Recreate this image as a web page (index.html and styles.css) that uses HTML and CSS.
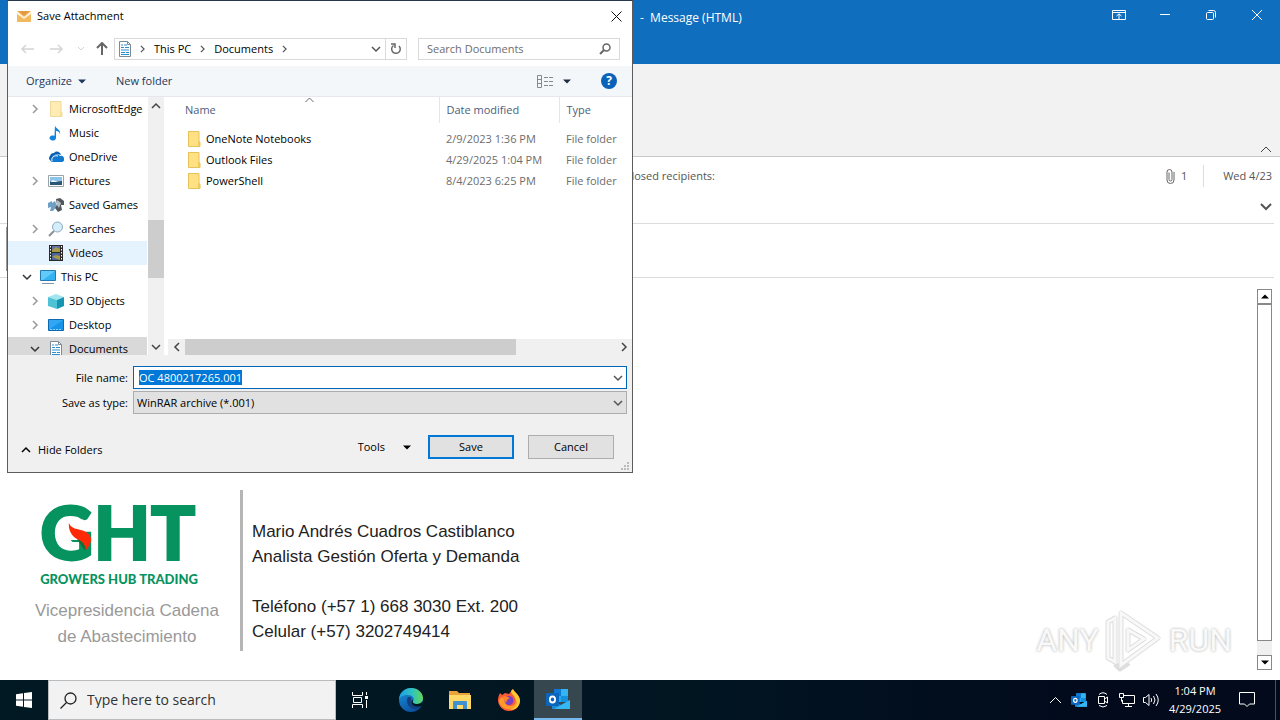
FILE: index.html
```html
<!DOCTYPE html>
<html lang="en">
<head>
<meta charset="utf-8">
<title>Save Attachment</title>
<link rel="stylesheet" href="styles.css">
</head>
<body>
<svg class="defs" aria-hidden="true">
  <symbol id="folder" viewBox="0 0 14 16"><path d="M1 0h11v10l1 1v4H1z" fill="#ffe184"/><path d="M1.500.500h10.500v10l1 1v4H1.500z" fill="none" stroke="#e6c25a"/><path d="M11 15v-4l2-1v5z" fill="#f0c956"/></symbol>
  <symbol id="doc" viewBox="0 0 16 16"><path d="M2.500.500h8l3 3v12h-11z" fill="#fff" stroke="#7d8a94"/><path d="M10.500.500v3h3" fill="none" stroke="#7d8a94"/><path d="M4 4h2M7 4h3M4 6.500h3M8 6.500h4M4 9h8M4 11.500h4M9 11.500h3M4 13.500h8" stroke="#2b8fd0"/></symbol>
  <symbol id="right" viewBox="0 0 8 10"><path d="M2 1l4 4-4 4" fill="none" stroke="currentColor" stroke-width="1.500"/></symbol>
  <symbol id="down" viewBox="0 0 10 8"><path d="M1 2l4 4 4-4" fill="none" stroke="currentColor" stroke-width="1.500"/></symbol>
  <symbol id="up" viewBox="0 0 10 8"><path d="M1 6l4-4 4 4" fill="none" stroke="currentColor" stroke-width="1.500"/></symbol>
  <symbol id="caret" viewBox="0 0 8 5"><path d="M0 .500h8L4 4.500z" fill="currentColor"/></symbol>
  <symbol id="caretup" viewBox="0 0 8 5"><path d="M0 4.500h8L4 .500z" fill="currentColor"/></symbol>
  <symbol id="outlook" viewBox="0 0 24 22"><path d="M8 1h14v13H8z" fill="#28a8ea"/><path d="M8 1h7v7H8z" fill="#0f78d4"/><path d="M15 1h7v7h-7z" fill="#32b5f1"/><path d="M15 8h7v6h-7z" fill="#1490df"/><path d="M6 12l9 5 9-5v9H6z" fill="#1a8bd8"/><path d="M24 12v9H8z" fill="#35b8f1"/><rect y="5" width="13" height="13" rx="1" fill="#0a65bd"/><ellipse cx="6.500" cy="11.500" rx="2.600" ry="3" fill="none" stroke="#fff" stroke-width="1.800"/></symbol>
</svg>

<main class="mail">
  <header class="titlebar">
    <span class="window-title">-&nbsp; Message (HTML)</span>
    <div class="window-buttons">
      <button aria-label="Ribbon display options"><svg width="14" height="12" viewBox="0 0 14 12"><path d="M.5 1.500h13v9H.5zM.5 3.500h13M7 10V5M4.500 7L7 4.800 9.500 7" fill="none" stroke="#fff"/></svg></button>
      <button aria-label="Minimize"><svg width="10" height="10"><path d="M0 4.500h10" stroke="#fff"/></svg></button>
      <button aria-label="Restore"><svg width="10" height="10" viewBox="0 0 10 10"><rect x=".5" y="2.500" width="7" height="7" rx="1" fill="none" stroke="#fff"/><path d="M2.500.500h5a2 2 0 0 1 2 2v5" fill="none" stroke="#fff"/></svg></button>
      <button aria-label="Close"><svg width="10" height="10"><path d="M0 0l10 10M10 0L0 10" stroke="#fff"/></svg></button>
    </div>
  </header>
  <div class="ribbon"><button aria-label="Collapse ribbon"><svg width="12" height="7"><path d="M1 6l5-5 5 5" fill="none" stroke="#444"/></svg></button></div>
  <section class="mail-head">
    <span class="recipients">losed recipients:</span>
    <span class="clip"><svg width="9" height="16" viewBox="0 0 9 16"><path d="M3 4.500v7a1.500 1.500 0 0 0 3 0V4a2.500 2.500 0 0 0-5 0v8a3.500 3.500 0 0 0 7 0V4" fill="none" stroke="#666"/></svg>1</span>
    <span class="date">Wed 4/23</span>
    <button class="expand" aria-label="Expand header"><svg width="12" height="8"><path d="M1 1l5 5 5-5" fill="none" stroke="#555" stroke-width="2"/></svg></button>
  </section>
  <section class="attachments"><div class="attachment"></div></section>
  <section class="message">
    <div class="signature">
      <div class="brand">
        <div class="logo" aria-label="GHT">GHT<svg class="leaf" width="24" height="30" viewBox="0 0 24 30"><path d="M0 0h13v18H0z" fill="#fff"/><path d="M1 1C4 10 17 5 22 14c3 5-1 10-4 14-1-6-4-8-9-11C4 14 0 8 1 1z" fill="#ff2a05"/><path d="M9 17c5 2 8 5 9 11-4-1-5-6-9-11z" fill="#176b35"/></svg></div>
        <div class="tagline">GROWERS HUB TRADING</div>
        <p>Vicepresidencia Cadena<br>de Abastecimiento</p>
      </div>
      <div class="contact">Mario Andrés Cuadros Castiblanco<br>Analista Gestión Oferta y Demanda<br><br>Teléfono (+57 1) 668 3030 Ext. 200<br>Celular (+57) 3202749414</div>
    </div>
    <div class="vscroll">
      <button aria-label="Scroll up"><svg width="8" height="5"><use href="#caretup"/></svg></button>
      <div class="vthumb"></div>
      <button aria-label="Scroll down"><svg width="8" height="5"><use href="#caret"/></svg></button>
    </div>
  </section>
  <div class="watermark">
    <span>ANY</span>
    <svg width="60" height="64" viewBox="0 0 60 64"><path d="M17 5l37 25-37 27zM17 20v22M4 14v36l7 4V10zM24 22l16 9-16 11zM11 56l5 5 9-6" fill="none" stroke="#dedede" stroke-width="5" stroke-linejoin="round"/><path d="M17 5l37 25-37 27zM4 14v36l7 4V10zM24 22l16 9-16 11z" fill="none" stroke="#f8f8f8" stroke-width="3"/></svg>
    <span>RUN</span>
  </div>
</main>

<section class="dialog" role="dialog" aria-label="Save Attachment">
  <header class="dialog-title">
    <svg width="14" height="11" viewBox="0 0 14 11"><path d="M0 0h14v11H0z" fill="#f3b95f"/><path d="M0 0l7 6 7-6v3L7 8 0 3z" fill="#fff1d8"/><path d="M1 0h12L7 5z" fill="#e59b43"/></svg>
    <span>Save Attachment</span>
    <button aria-label="Close"><svg width="11" height="11"><path d="M.5.500l10 10M10.500.500l-10 10" stroke="#111"/></svg></button>
  </header>
  <nav class="nav">
    <div class="history">
      <button aria-label="Back"><svg width="13" height="10"><path d="M13 5H1M5 1L1 5l4 4" fill="none" stroke="#d4d4d4" stroke-width="1.500"/></svg></button>
      <button aria-label="Forward"><svg width="13" height="10"><path d="M0 5h12M8 1l4 4-4 4" fill="none" stroke="#d4d4d4" stroke-width="1.500"/></svg></button>
      <button class="recent" aria-label="Recent"><svg width="6" height="5"><path d="M0 1l3 3 3-3" fill="none" stroke="#d4d4d4"/></svg></button>
      <button aria-label="Up"><svg width="12" height="13"><path d="M6 13V2M1 6l5-5 5 5" fill="none" stroke="#666" stroke-width="2"/></svg></button>
    </div>
    <div class="address">
      <svg class="place" width="16" height="16"><use href="#doc"/></svg>
      <svg class="sep" width="7" height="8"><use href="#right"/></svg>
      <button>This PC</button>
      <svg class="sep" width="7" height="8"><use href="#right"/></svg>
      <button>Documents</button>
      <svg class="sep" width="7" height="8"><use href="#right"/></svg>
      <button class="history-drop" aria-label="Previous locations"><svg width="10" height="8"><use href="#down"/></svg></button>
      <button class="refresh" aria-label="Refresh"><svg width="12" height="13" viewBox="0 0 12 13"><path d="M9 4a4.300 4.300 0 1 1-5.500-.500M1 2h4v4" fill="none" stroke="#666" stroke-width="1.500"/></svg></button>
    </div>
    <div class="search">
      <input type="text" placeholder="Search Documents" aria-label="Search Documents">
      <svg width="12" height="12" viewBox="0 0 12 12"><circle cx="7.500" cy="4.500" r="3.500" fill="none" stroke="#666" stroke-width="1.500"/><path d="M5 7l-4 4" stroke="#666" stroke-width="2"/></svg>
    </div>
  </nav>
  <div class="toolbar">
    <button>Organize <svg width="8" height="5"><use href="#caret"/></svg></button>
    <button>New folder</button>
    <button class="view" aria-label="Change view"><svg width="16" height="13" viewBox="0 0 16 13"><path d="M.5.500h4v12h-4zM.5 4.500h4M.5 8.500h4M7 2.500h4M12 2.500h4M7 6.500h4M12 6.500h4M7 10.500h4M12 10.500h4" fill="none" stroke="#888"/></svg><svg width="8" height="5"><use href="#caret"/></svg></button>
    <button class="help" aria-label="Help">?</button>
  </div>
  <div class="browser">
    <ul class="tree">
      <li><svg class="exp"><use href="#right"/></svg><svg width="16" height="16" class="pale"><use href="#folder"/></svg>MicrosoftEdge</li>
      <li><i class="exp"></i><svg width="16" height="16" viewBox="0 0 16 16"><path d="M7 0c0 4 6 4 5 9-1-3-3-3-4-3v7a3.200 2.600 0 1 1-1.500-2.200z" fill="#1385dc"/></svg>Music</li>
      <li><i class="exp"></i><svg width="16" height="16" viewBox="0 0 16 16"><path d="M3 12a3 3 0 0 1-1-5 4 4 0 0 1 4-3 4 4 0 0 1 7 2c-5-2-9 0-10 6z" fill="#0a5fb4"/><path d="M5 13a2.500 2.500 0 0 1 0-5 4 4 0 0 1 7-1 3 3 0 0 1 2 6z" fill="#1179d0"/><path d="M4 12c-1-4 3-6 6-5" fill="none" stroke="#fff"/></svg>OneDrive</li>
      <li><svg class="exp"><use href="#right"/></svg><svg width="16" height="16" viewBox="0 0 16 16"><path d="M.5 2.500h15v11H.5z" fill="#fff" stroke="#9aa3aa"/><path d="M2 4h12v8H2z" fill="#8bc4e8"/><path d="M2 8l4 1 8-1v4H2z" fill="#285778"/><path d="M2 9l3-2 5 2z" fill="#e8f5fc"/></svg>Pictures</li>
      <li><i class="exp"></i><svg width="16" height="16" viewBox="0 0 16 16"><path d="M0 6l4-2v2l3-2 2 5-4 5H2l1-4-3 1z" fill="#6e9fc4"/><path d="M8 2l4-1 4 3v4h-3l1 5-4 2-3-4 2-3z" fill="#52585e"/><path d="M9 3l4 3-2 5-2-3z" fill="#b5bdc4"/></svg>Saved Games</li>
      <li><svg class="exp"><use href="#right"/></svg><svg width="16" height="16" viewBox="0 0 16 16"><path d="M6 10l-5 5" stroke="#8b8f94" stroke-width="2"/><circle cx="9.500" cy="6" r="5" fill="#d4edfb" stroke="#8ba9bd"/></svg>Searches</li>
      <li class="hover"><i class="exp"></i><svg width="16" height="16" viewBox="0 0 16 16"><path d="M1 0h14v16H1z" fill="#29292b"/><path d="M4 1h8v6H4z" fill="#6271a8"/><path d="M4 8h8v7H4z" fill="#4b669b"/><path d="M4 5l4-3 4 2v3H4zM4 12l4-2 4 1v4z" fill="#a59a46"/><path d="M2.500 1v15M13.500 1v15" stroke="#fff" stroke-dasharray="1.500 1.500"/></svg>Videos</li>
      <li class="root"><svg class="exp open"><use href="#down"/></svg><svg width="16" height="16" viewBox="0 0 16 16"><path d="M.5 1.500h15v10H.5z" fill="#35b2f2" stroke="#2479ae"/><path d="M1 2h14L3 11H1z" fill="#62cafa"/><path d="M2 14.500h12" stroke="#8796a0"/></svg>This PC</li>
      <li><svg class="exp"><use href="#right"/></svg><svg width="16" height="16" viewBox="0 0 16 16"><path d="M0 4l8-3 8 3-7 3z" fill="#a1e6ee"/><path d="M0 4l9 3v9l-9-3z" fill="#4fc3d5"/><path d="M9 7l7-3v9l-7 3z" fill="#1496b2"/></svg>3D Objects</li>
      <li><svg class="exp"><use href="#right"/></svg><svg width="16" height="16" viewBox="0 0 16 16"><path d="M.5 2.500h15v11H.5z" fill="#1594ea" stroke="#0f69b0"/><path d="M1 3h14L2 12H1z" fill="#31a7f4"/><path d="M2 12.500h12" stroke="#8bd1ff" stroke-dasharray="2 1"/></svg>Desktop</li>
      <li class="selected"><svg class="exp open"><use href="#down"/></svg><svg width="16" height="16"><use href="#doc"/></svg>Documents</li>
    </ul>
    <div class="tree-scroll">
      <button aria-label="Scroll up"><svg width="10" height="8"><use href="#up"/></svg></button>
      <div class="tree-thumb"></div>
      <button aria-label="Scroll down"><svg width="10" height="8"><use href="#down"/></svg></button>
    </div>
    <div class="files">
      <table>
        <colgroup><col class="c-name"><col class="c-date"><col></colgroup>
        <thead><tr><th>Name<svg class="sort" width="9" height="6"><path d="M.5 5l4-4 4 4" fill="none" stroke="#666"/></svg></th><th>Date modified</th><th>Type</th></tr></thead>
        <tbody>
          <tr><td><div class="file"><svg width="14" height="16"><use href="#folder"/></svg>OneNote Notebooks</div></td><td>2/9/2023 1:36 PM</td><td>File folder</td></tr>
          <tr><td><div class="file"><svg width="14" height="16"><use href="#folder"/></svg>Outlook Files</div></td><td>4/29/2025 1:04 PM</td><td>File folder</td></tr>
          <tr><td><div class="file"><svg width="14" height="16"><use href="#folder"/></svg>PowerShell</div></td><td>8/4/2023 6:25 PM</td><td>File folder</td></tr>
        </tbody>
      </table>
      <div class="hscroll">
        <button aria-label="Scroll left"><svg width="8" height="10"><path d="M6 1L2 5l4 4" fill="none" stroke="#444" stroke-width="1.500"/></svg></button>
        <div class="htrack"><div class="hthumb"></div></div>
        <button aria-label="Scroll right"><svg width="8" height="10"><path d="M2 1l4 4-4 4" fill="none" stroke="#444" stroke-width="1.500"/></svg></button>
      </div>
    </div>
  </div>
  <form class="fields">
    <label for="filename">File name:</label>
    <div class="combo"><input id="filename" type="text" value="OC 4800217265.001"><svg width="10" height="8"><use href="#down"/></svg></div>
    <label for="filetype">Save as type:</label>
    <div class="combo"><select id="filetype"><option>WinRAR archive (*.001)</option></select><svg width="10" height="8"><use href="#down"/></svg></div>
  </form>
  <footer class="actions">
    <button class="hide"><svg width="10" height="8"><use href="#up"/></svg>Hide Folders</button>
    <button class="tools">Tools <svg width="8" height="5"><use href="#caret"/></svg></button>
    <button class="push primary">Save</button>
    <button class="push">Cancel</button>
  </footer>
  <svg class="grip" width="9" height="9"><path d="M6 1h2M3 4h2M6 4h2M0 7h2M3 7h2M6 7h2" stroke="#bbb" stroke-width="2"/></svg>
</section>

<footer class="taskbar">
  <button class="start" aria-label="Start"><svg width="16" height="16" viewBox="0 0 16 16"><path d="M0 2.200L7 1.200V7.500H0zM8 1l8-1v7.500H8zM0 8.500h7v6.300L0 13.800zM8 8.500h8V16l-8-1z" fill="#fff"/></svg></button>
  <div class="task-search"><svg width="17" height="17" viewBox="0 0 17 17"><circle cx="10.500" cy="6.500" r="5.500" fill="none" stroke="#222" stroke-width="1.300"/><path d="M6.500 10.500l-6 6" stroke="#222" stroke-width="1.300"/></svg><input type="text" placeholder="Type here to search" aria-label="Type here to search"></div>
  <div class="apps">
    <button aria-label="Task view"><svg width="17" height="16" viewBox="0 0 17 16"><path d="M.5 0v3.500h10V0M.5 16v-3.500h10V16M1.500 5.500h8v5h-8zM14.500 0v3M14.500 8v8" fill="none" stroke="#fff"/><path d="M13 4h3v3h-3z" fill="#fff"/></svg></button>
    <button aria-label="Edge"><svg width="24" height="24" viewBox="0 0 24 24"><defs><linearGradient id="eg" x2="1"><stop stop-color="#1d9fe4"/><stop offset=".55" stop-color="#2fc2c0"/><stop offset="1" stop-color="#62d957"/></linearGradient><linearGradient id="eb" x2=".6" y2="1"><stop stop-color="#1a93dc"/><stop offset="1" stop-color="#0c4f9e"/></linearGradient></defs><circle cx="12" cy="12" r="12" fill="url(#eb)"/><path d="M0 11C1 4 6 0 12 0c7 0 12 5 12 10 0 4-3 6-6 6-3 0-5-1-4-3 2-3-1-6-5-6-5 0-8 2-9 4z" fill="url(#eg)"/><path d="M9 9c-3 5 1 12 7 12 3 0 5-1 7-3-3 1-11 0-11-5 0-3 1-4-3-4z" fill="#123f80"/><path d="M14 13c-1 2 1 3 4 3 2 0 5-1 6-3-.2 2-.5 4-1.500 5-4 1.500-10 0-10-4 0-2 2-3 1.500-1z" fill="#021820"/></svg></button>
    <button aria-label="File Explorer"><svg width="22" height="18" viewBox="0 0 22 18"><path d="M0 0h8l2 2h11v4H0z" fill="#e9a33a"/><path d="M0 4h22v14H0z" fill="#ffd868"/><path d="M4 18v-7q0-1 1-1h12q1 0 1 1v7h-4v-4H8v4z" fill="#3d92cf"/></svg></button>
    <button aria-label="Firefox"><svg width="24" height="24" viewBox="0 0 24 24"><path d="M3 5l2 2 3-2 4 1 4-5c1 3 6 5 7 11 0 7-5 11-11 11S1 18 1 12c0-3 1-5 2-7z" fill="#ff5a36"/><path d="M14 3l2-2c1 3 6 5 7 11 0 7-5 10-10 10 5-3 7-7 5-12-1-3-4-4-4-7z" fill="#ffc832"/><path d="M2 13c1 7 8 9 12 8 4-1 7-5 6-10 0 4-3 7-7 7-5 0-6-5-3-7-3-3-7-2-8 2z" fill="#ff9a2b"/><circle cx="12" cy="12.500" r="4.500" fill="#7841c5"/><path d="M5 9l3-1 5 2-3 2-1 3z" fill="#ff8128"/></svg></button>
    <button class="active" aria-label="Outlook"><svg width="24" height="22"><use href="#outlook"/></svg></button>
  </div>
  <div class="tray">
    <button aria-label="Show hidden icons"><svg width="13" height="8"><path d="M1 7l5.500-5.500L12 7" fill="none" stroke="#fff"/></svg></button>
    <button aria-label="Outlook"><svg width="16" height="16"><use href="#outlook"/></svg></button>
    <button aria-label="Meet now"><svg width="14" height="16" viewBox="0 0 14 16"><path d="M2.500 4.500h6v7h-6zM8.500 7l3-2v6l-3-2M3 2.500Q7-1 11 2.500M3 13.500q4 3 8 0" fill="none" stroke="#fff"/></svg></button>
    <button aria-label="Network"><svg width="16" height="15" viewBox="0 0 16 15"><path d="M5 2.500h10.500v8H3.500V7M9.500 10.500v3M6 13.500h7M.5.500h4v4h-4zM2.500 4.500v4" fill="none" stroke="#fff"/></svg></button>
    <button aria-label="Volume"><svg width="17" height="14" viewBox="0 0 17 14"><path d="M.5 4.500h2l3.500-3v11l-3.500-3h-2zM8 5q1.500 2 0 4M10.500 3q3 4 0 8M13 1q4.500 6 0 12" fill="none" stroke="#fff"/></svg></button>
    <div class="clock">1:04 PM<br>4/29/2025</div>
    <button class="notice" aria-label="Notifications"><svg width="16" height="16" viewBox="0 0 16 16"><path d="M.5.500h15v11.500h-5L8 14.500 5.500 12h-5z" fill="none" stroke="#fff"/></svg></button>
    <button class="show-desktop" aria-label="Show desktop"></button>
  </div>
</footer>
<script src="app.js"></script>
</body>
</html>
```

FILE: styles.css
```css
* { box-sizing: border-box; }
body { margin: 0; height: 100vh; display: flex; flex-direction: column; overflow: hidden; background: #fff; color: #000; font: 11px/16px "Open Sans", "Noto Sans", sans-serif; }
button { margin: 0; padding: 0; border: 0; background: none; font: inherit; color: inherit; display: flex; align-items: center; justify-content: center; white-space: nowrap; }
input, select { font: inherit; color: inherit; border: 0; outline: 0; margin: 0; min-width: 0; }
svg { flex: none; display: block; }
.defs { position: absolute; width: 0; height: 0; }

.mail { position: relative; flex: 1; min-height: 0; display: flex; flex-direction: column; color: #555; }
.titlebar { height: 64px; background: #106ebe; color: #fff; padding-left: 50%; display: flex; align-items: flex-start; justify-content: space-between; font-size: 12px; }
.window-title { padding-top: 10px; }
.window-buttons { display: flex; }
.window-buttons button { width: 46px; height: 30px; }
.ribbon { height: 93px; background: #f2f2f2; border-bottom: 1px solid #c8c8c8; display: flex; align-items: flex-end; justify-content: flex-end; padding: 3px 8px; }
.mail-head { height: 67px; margin-right: 6px; border-bottom: 1px solid #dcdcdc; display: grid; grid-template-columns: 1fr auto auto; grid-template-rows: 22px 1fr; row-gap: 3px; padding: 8px 2px 0 0; align-items: center; }
.recipients { width: 715px; text-align: right; }
.clip { display: flex; gap: 6px; align-items: center; padding-right: 16px; border-right: 1px solid #dcdcdc; height: 22px; }
.date { padding-left: 19px; }
.expand { grid-column: 3; justify-self: end; }
.attachments { height: 54px; margin-right: 6px; padding: 3px 6px 6px; border-bottom: 1px solid #dcdcdc; }
.attachment { width: 200px; height: 44px; border: 1px solid #999; }
.message { flex: 1; min-height: 0; display: flex; justify-content: space-between; align-items: flex-end; padding: 11px 8px 10px 14px; }
.signature { display: flex; margin-bottom: 19px; font: 17px/25px "Liberation Sans", Arial, sans-serif; }
.brand { width: 229px; height: 161px; border-right: 3px solid #b5b5b5; padding-top: 6px; text-align: center; color: #999; }
.brand p { margin: 11px 0 0; line-height: 26px; }
.logo { position: relative; width: 160px; margin-left: 26px; text-align: left; font: 900 74px/72px Lato, sans-serif; color: #079360; -webkit-text-stroke: 2px #079360; }
.leaf { position: absolute; left: 28px; top: 26px; }
.tagline { font: 900 13px/16px Lato, sans-serif; color: #079360; padding-top: 3px; margin-right: 16px; }
.contact { padding: 29px 0 0 9px; color: #222; }
.vscroll { align-self: stretch; width: 15px; background: #f0f0f0; display: flex; flex-direction: column; color: #000; }
.vscroll button { height: 15px; border: 1px solid #888; background: #fff; }
.vthumb { flex: 1; border: 1px solid #888; background: #fff; margin-bottom: 14px; }
.watermark { position: absolute; right: 48px; bottom: 8px; display: flex; align-items: center; gap: 5px; color: #f9f9f9; font: 32px/64px Roboto, sans-serif; text-shadow: 0 0 3px #aaa; }

.dialog { position: absolute; left: 7px; top: 0; width: 626px; border: 1px solid #5c5c5c; border-top-color: #26364c; background: #f0f0f0; z-index: 2; }
.dialog-title { height: 30px; background: #fff; display: flex; align-items: center; gap: 6px; padding: 0 10px 0 9px; }
.dialog-title button { margin-left: auto; }
.nav { height: 35px; background: #fff; display: flex; align-items: center; padding: 0 12px 0 13px; }
.history { display: flex; align-items: center; gap: 16px; width: 93px; }
.history .recent { margin: 0 -4px 0 -1px; }
.address { width: 293px; height: 22px; border: 1px solid #d9d9d9; display: flex; align-items: center; gap: 8px; padding-left: 2px; }
.place { margin-right: -2px; }
.sep { color: #555; }
.history-drop { margin-left: auto; margin-right: -4px; color: #555; }
.refresh { width: 21px; height: 20px; border-left: 1px solid #d9d9d9; }
.search { flex: 1; margin-left: 11px; height: 22px; border: 1px solid #d9d9d9; display: flex; align-items: center; padding: 0 8px; }
.search input { flex: 1; padding: 0; }
input::placeholder { color: #6d6d6d; opacity: 1; }
.toolbar { height: 31px; background: #f4f7fa; border-bottom: 1px solid #e5e8ec; color: #1e395b; display: flex; align-items: center; gap: 30px; padding: 0 15px 0 18px; }
.toolbar button { gap: 6px; }
.toolbar .view { margin-left: auto; gap: 10px; color: #1e2b40; }
.toolbar .help { width: 16px; height: 16px; border-radius: 8px; background: #0a63b8; color: #fff; font-size: 12px; font-weight: 700; }
.browser { height: 258px; display: flex; background: #fff; }
.tree { list-style: none; margin: 0; padding: 0; width: 139px; overflow: hidden; }
.tree li { height: 24px; display: flex; align-items: center; gap: 5px; padding-left: 22px; white-space: nowrap; }
.tree li.root { padding-left: 14px; }
.exp { width: 10px; height: 10px; margin-right: 3px; color: #999; flex: none; }
.exp.open { color: #333; }
.pale { opacity: .6; }
.hover { background: #e5f3ff; }
.selected { background: #d9d9d9; }
.tree-scroll { width: 16px; margin-left: 1px; background: #f0f0f0; display: flex; flex-direction: column; color: #444; }
.tree-scroll button { height: 17px; }
.tree-scroll button:last-child { margin-top: auto; }
.tree-thumb { height: 58px; margin-top: 106px; background: #cdcdcd; }
.files { flex: 1; margin-left: 4px; display: flex; flex-direction: column; justify-content: space-between; min-width: 0; }
table { border-collapse: collapse; table-layout: fixed; width: 100%; }
.c-name { width: 271px; }
.c-date { width: 120px; }
th { position: relative; height: 26px; padding: 0 0 0 7px; font-weight: 400; text-align: left; color: #4c607a; }
th + th { border-left: 1px solid #e5e5e5; }
th:first-child { padding-left: 17px; }
thead::after { content: ""; display: block; height: 5px; }
.sort { position: absolute; left: 50%; margin-left: 2px; top: 0; }
td { height: 21px; padding: 0 0 0 7px; color: #6d6d6d; white-space: nowrap; }
td:first-child { padding-left: 19px; color: #000; }
.file { display: flex; align-items: center; gap: 5px; }
.hscroll { height: 16px; background: #f0f0f0; display: flex; }
.hscroll button { width: 17px; }
.htrack { flex: 1; }
.hthumb { width: 77%; height: 100%; background: #cdcdcd; }
.fields { display: grid; grid-template-columns: 120px 1fr; column-gap: 5px; row-gap: 2px; padding: 11px 5px 0 0; align-items: center; }
.fields label { text-align: right; }
.combo { position: relative; }
.combo svg { position: absolute; right: 4px; top: 8px; color: #555; pointer-events: none; }
.combo input, .combo select { display: block; width: 100%; height: 23px; padding: 0 20px 0 5px; border: 1px solid #0067b8; background: #fff; appearance: none; }
.combo select { padding-left: 3px; border-color: #adadad; background: #e1e1e1; }
.combo input::selection { background: #0078d7; color: #fff; }
.actions { height: 58px; display: flex; align-items: center; padding: 8px 18px 0 13px; gap: 14px; }
.hide { gap: 7px; padding-top: 6px; margin-right: auto; }
.tools { gap: 18px; margin-right: 3px; }
.push { width: 86px; height: 24px; border: 1px solid #adadad; background: #e1e1e1; }
.primary { border: 2px solid #0078d7; }
.grip { position: absolute; right: 2px; bottom: 1px; }

.taskbar { height: 40px; flex: none; display: flex; background: linear-gradient(90deg, #011922, #011622 50%, #020a1c 85%); color: #fff; }
.start { width: 48px; }
.task-search { width: 288px; background: #f2f2f2; border: 1px solid #b9bcbe; display: flex; align-items: center; gap: 10px; padding: 0 11px; }
.task-search input { flex: 1; padding: 0; background: none; font-size: 14px; }
.task-search input::placeholder { color: #333; }
.apps { display: flex; gap: 1px; }
.apps button { width: 48px; }
.apps button:first-child { margin-right: 2px; }
.apps .active { background: #36474f; border-bottom: 2px solid #76b9ed; }
.tray { margin-left: auto; display: flex; }
.tray button { width: 24px; }
.clock { width: 64px; text-align: center; line-height: 18px; padding-top: 2px; }
.tray .notice { width: 40px; }
.tray .show-desktop { width: 5px; margin-left: 8px; border-left: 1px solid #4a5060; }
```

FILE: app.js
```js
const filename = document.getElementById("filename");
filename.focus();
filename.select();
```
